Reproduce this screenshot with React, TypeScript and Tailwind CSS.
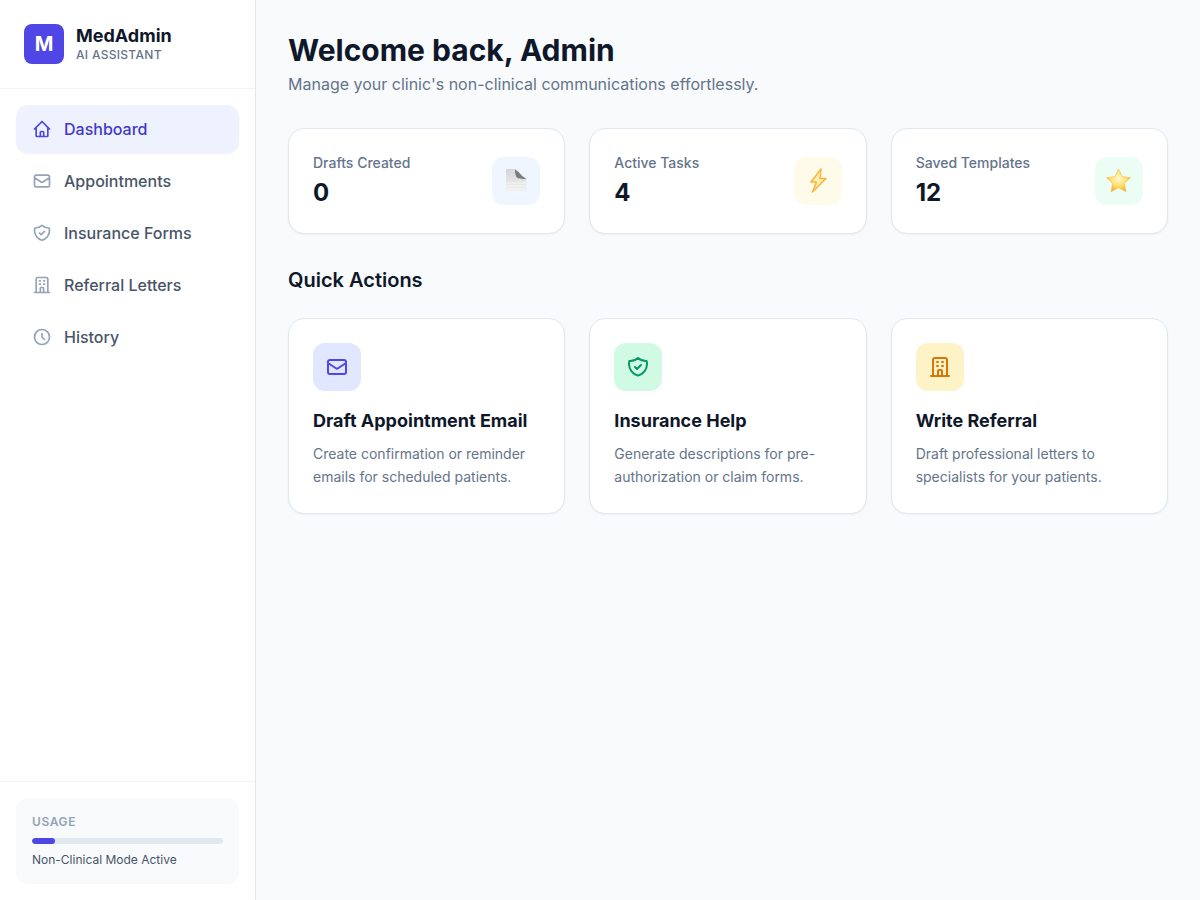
import type { ComponentType } from "react"
import {
  HiOutlineClock,
  HiOutlineHome,
  HiOutlineMail,
  HiOutlineOfficeBuilding,
  HiOutlineShieldCheck,
} from "react-icons/hi"

type IconType = ComponentType<{ className?: string }>

const navItems: { label: string; icon: IconType; active?: boolean }[] = [
  { label: "Dashboard", icon: HiOutlineHome, active: true },
  { label: "Appointments", icon: HiOutlineMail },
  { label: "Insurance Forms", icon: HiOutlineShieldCheck },
  { label: "Referral Letters", icon: HiOutlineOfficeBuilding },
  { label: "History", icon: HiOutlineClock },
]

function DocGlyph() {
  return (
    <svg viewBox="0 0 32 32" className="w-8 h-8">
      <defs>
        <linearGradient id="docFill" x1="0" y1="0" x2="0" y2="1">
          <stop offset="0" stopColor="#d6d6d6" />
          <stop offset="1" stopColor="#efefef" />
        </linearGradient>
      </defs>
      <path d="M6 4h9.5L26.5 14V26H6z" fill="url(#docFill)" />
      <path d="M6.5 18h19.5M6.5 21h19.5M6.5 24h19.5" stroke="#f6f6f6" strokeWidth="1" />
      <path d="M15 4.5c0 4.5 .5 7.5 3 8.8 2.5 .8 5.5 .7 8.5 .7L22 11l-3.5-4z" fill="#7a7a7a" />
    </svg>
  )
}

function BoltGlyph() {
  return (
    <svg viewBox="0 0 32 32" className="w-8 h-8">
      <path
        d="M19 4 9 17h5.5L10.5 27 24 13.5h-6z"
        fill="#feeeb0"
        stroke="#fab53a"
        strokeWidth="1.5"
        strokeLinejoin="round"
      />
    </svg>
  )
}

function StarGlyph() {
  return (
    <svg viewBox="0 0 32 32" className="w-8 h-8">
      <defs>
        <radialGradient id="starFill" cx="0.5" cy="0.42" r="0.6">
          <stop offset="0" stopColor="#fff8d2" />
          <stop offset="0.55" stopColor="#fde06a" />
          <stop offset="1" stopColor="#f0a92a" />
        </radialGradient>
      </defs>
      <path
        d="M15.5 4l3.6 7.6 8.4 1.1-6.1 5.8 1.6 8.3-7.5-4.1-7.5 4.1 1.6-8.3-6.1-5.8 8.4-1.1z"
        fill="url(#starFill)"
        stroke="#f3bd55"
        strokeWidth="0.6"
        strokeLinejoin="round"
      />
    </svg>
  )
}

const stats: { label: string; value: string; glyph: IconType; tint: string }[] = [
  { label: "Drafts Created", value: "0", glyph: DocGlyph, tint: "bg-[#eff6ff]" },
  { label: "Active Tasks", value: "4", glyph: BoltGlyph, tint: "bg-[#fffbeb]" },
  { label: "Saved Templates", value: "12", glyph: StarGlyph, tint: "bg-[#ecfdf5]" },
]

const actions: { title: string; text: string; icon: IconType; tint: string }[] = [
  {
    title: "Draft Appointment Email",
    text: "Create confirmation or reminder emails for scheduled patients.",
    icon: HiOutlineMail,
    tint: "bg-[#e0e7ff] text-[#4f46e5]",
  },
  {
    title: "Insurance Help",
    text: "Generate descriptions for pre-authorization or claim forms.",
    icon: HiOutlineShieldCheck,
    tint: "bg-[#d1fae5] text-[#059669]",
  },
  {
    title: "Write Referral",
    text: "Draft professional letters to specialists for your patients.",
    icon: HiOutlineOfficeBuilding,
    tint: "bg-[#fef3c7] text-[#d97706]",
  },
]

function Sidebar() {
  return (
    <aside className="w-[256px] shrink-0 h-full bg-white border-r border-[#e2e8f0] flex flex-col">
      <div className="h-[89px] px-6 flex items-center gap-3 border-b border-[#f1f5f9]">
        <div className="w-10 h-10 rounded-lg bg-[#4f46e5] text-white text-xl font-bold flex items-center justify-center">
          M
        </div>
        <div>
          <div className="text-lg leading-[22px] font-bold text-[#0f172a]">MedAdmin</div>
          <div className="text-xs leading-4 font-medium tracking-wide text-[#64748b]">AI ASSISTANT</div>
        </div>
      </div>

      <nav className="flex-1 p-4 flex flex-col gap-1">
        {navItems.map((item) => (
          <a
            key={item.label}
            className={`h-12 px-4 rounded-xl flex items-center gap-3 text-base font-medium ${
              item.active ? "bg-[#eef2ff] text-[#4338ca] shadow-xs" : "text-[#475569]"
            }`}
          >
            <item.icon className={`w-5 h-5 ${item.active ? "text-[#4f46e5]" : "text-[#94a3b8]"}`} />
            <span>{item.label}</span>
          </a>
        ))}
      </nav>

      <div className="p-4 border-t border-[#f1f5f9]">
        <div className="h-[86px] rounded-xl bg-[#f8fafc] p-4">
          <div className="text-xs leading-4 font-semibold tracking-wider text-[#94a3b8]">USAGE</div>
          <div className="mt-2 h-1.5 rounded-full bg-[#e2e8f0] overflow-hidden">
            <div className="h-full w-[12%] rounded-full bg-[#4f46e5]"></div>
          </div>
          <div className="mt-2 text-xs leading-4 text-[#475569]">Non-Clinical Mode Active</div>
        </div>
      </div>
    </aside>
  )
}

export default function App() {
  return (
    <div className="h-[900px] flex bg-[#f8fafc] overflow-hidden font-['Inter',sans-serif]">
      <Sidebar />
      <main className="flex-1 p-8">
        <h1 className="text-[30px] leading-9 font-bold text-[#0f172a]">Welcome back, Admin</h1>
        <p className="mt-1 text-base text-[#64748b]">Manage your clinic's non-clinical communications effortlessly.</p>

        <div className="mt-8 grid grid-cols-3 gap-6">
          {stats.map((s) => (
            <div
              key={s.label}
              className="h-[106px] bg-white rounded-2xl border border-[#e2e8f0] shadow-xs px-6 flex items-center justify-between"
            >
              <div>
                <div className="text-sm font-medium text-[#64748b]">{s.label}</div>
                <div className="mt-1 text-2xl font-bold text-[#0f172a]">{s.value}</div>
              </div>
              <div className={`w-12 h-12 rounded-xl flex items-center justify-center ${s.tint}`}>
                <s.glyph />
              </div>
            </div>
          ))}
        </div>

        <h2 className="mt-8 text-xl font-semibold text-[#0f172a]">Quick Actions</h2>

        <div className="mt-6 grid grid-cols-3 gap-6">
          {actions.map((a) => (
            <div key={a.title} className="bg-white rounded-2xl border border-[#e2e8f0] shadow-xs p-6">
              <div className={`w-12 h-12 rounded-xl flex items-center justify-center ${a.tint}`}>
                <a.icon className="w-6 h-6" />
              </div>
              <h3 className="mt-4 text-lg font-bold text-[#0f172a]">{a.title}</h3>
              <p className="mt-2 text-sm leading-relaxed text-[#64748b]">{a.text}</p>
            </div>
          ))}
        </div>
      </main>
    </div>
  )
}
